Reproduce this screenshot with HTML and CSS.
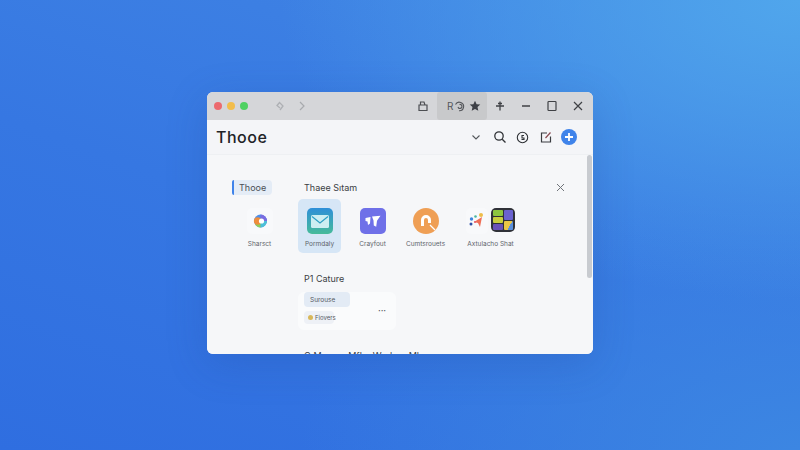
FILE: index.html
```html
<!DOCTYPE html>
<html lang="en">
<head>
    <meta charset="UTF-8">
    <title>Thooe</title>
    <link rel="stylesheet" href="styles.css">
</head>
<body>
    <div class="window">
        <!-- title bar -->
        <div class="titlebar">
            <div class="lights">
                <span class="light red"></span>
                <span class="light yellow"></span>
                <span class="light green"></span>
            </div>
            <div class="nav-arrows">
                <svg width="12" height="12" viewBox="0 0 12 12" fill="none" stroke="#aeb0b4" stroke-width="1.3"><path d="M6 2 3 5.500 6 8M6 3l3 3-3 4"/></svg>
                <svg width="12" height="12" viewBox="0 0 12 12" fill="none" stroke="#a8aaae" stroke-width="1.2"><path d="m4 2 4 4-4 4"/></svg>
            </div>
            <div class="title-tools">
                <span class="tool tool-tab">
                    <svg width="12" height="12" viewBox="0 0 12 12" fill="none" stroke="#4c4e52" stroke-width="1.2"><path d="M2 5h8v5.500H2zM3.500 5V2h3.500l1 3"/></svg>
                </span>
                <div class="tool-group">
                    <span class="group-text">R</span>
                    <svg width="11" height="11" viewBox="0 0 11 11" fill="none" stroke="#55575b" stroke-width="1.1"><path d="M1.500 3.500A4.300 4.300 0 1 1 5 9.800M5.500 3.500a2 2 0 1 1-1.500 2.500"/></svg>
                    <svg class="group-star" width="12" height="12" viewBox="0 0 12 12" fill="#3d4046"><path d="m6 .8 1.600 3.400 3.700.4-2.800 2.500.8 3.700L6 8.900l-3.300 1.900.8-3.700L.7 4.600l3.700-.4z"/></svg>
                </div>
                <span class="tool">
                    <svg width="12" height="12" viewBox="0 0 12 12" fill="none" stroke="#3f4145" stroke-width="1.300"><path d="M6 1.500v9M2 6h8M4 3.500h4"/></svg>
                </span>
                <span class="tool">
                    <svg width="12" height="12" viewBox="0 0 12 12" fill="none" stroke="#3f4145" stroke-width="1.300"><path d="M2 6h8"/></svg>
                </span>
                <span class="tool">
                    <svg width="12" height="12" viewBox="0 0 12 12" fill="none" stroke="#3f4145" stroke-width="1.200"><rect x="2" y="1.500" width="8" height="9" rx=".8"/></svg>
                </span>
                <span class="tool">
                    <svg width="12" height="12" viewBox="0 0 12 12" fill="none" stroke="#3f4145" stroke-width="1.200"><path d="m2 2 8 8M10 2l-8 8"/></svg>
                </span>
            </div>
        </div>

        <!-- header -->
        <div class="app-header">
            <h1>Thooe</h1>
            <div class="header-tools">
                <svg class="hd-chevron" width="12" height="12" viewBox="0 0 12 12" fill="none" stroke="#55585d" stroke-width="1.100"><path d="m2.500 4.500 3.500 3.500 3.500-3.500"/></svg>
                <svg width="14" height="14" viewBox="0 0 14 14" fill="none" stroke="#2f3236" stroke-width="1.300"><circle cx="6" cy="6" r="4.200"/><path d="m9.200 9.200 3.300 3.300"/></svg>
                <svg class="hd-clock" width="13" height="13" viewBox="0 0 13 13" fill="none" stroke="#2f3236" stroke-width="1.100"><circle cx="6.500" cy="6.500" r="5.200"/><path d="M8 4.500H6v2.500h2v1.500H5.500"/></svg>
                <svg width="14" height="14" viewBox="0 0 14 14" fill="none" stroke="#3a3c40" stroke-width="1.200"><path d="M8 3H2.500v9h9V6.500"/><path d="m6.500 8 5-5.500" stroke="#8a4a50"/></svg>
                <span class="add-btn">
                    <svg width="10" height="10" viewBox="0 0 10 10" fill="none" stroke="#fff" stroke-width="1.800"><path d="M5 1v8M1 5h8"/></svg>
                </span>
            </div>
        </div>

        <!-- content -->
        <div class="content">
            <aside class="sidebar">
                <div class="side-item">Thooe</div>
            </aside>
            <main class="main">
                <div class="section-head">
                    <h2>Thaee Sıtam</h2>
                    <svg width="9" height="9" viewBox="0 0 9 9" fill="none" stroke="#70747a" stroke-width="1"><path d="m1 1 7 7M8 1 1 8"/></svg>
                </div>
                <div class="apps">
                    <div class="app app-first">
                        <span class="app-icon icon-white">
                            <svg width="16" height="16" viewBox="0 0 16 16"><circle cx="8.500" cy="8" r="6.500" fill="#4f8fe8"/><path d="M8.500 1.500A6.500 6.500 0 0 1 15 8H8.500z" fill="#7a6ce0"/><path d="M15 8a6.500 6.500 0 0 1-6.500 6.500L8 8z" fill="#4cc0d8"/><path d="M8.500 14.500A6.500 6.500 0 0 1 3 11l5.500-3z" fill="#8fcf5a"/><circle cx="5.500" cy="8" r="3.700" fill="#ef8d3c"/><circle cx="9.500" cy="8" r="2.600" fill="#fff"/></svg>
                        </span>
                        <span class="app-label">Sharsct</span>
                    </div>
                    <div class="app app-selected">
                        <span class="app-icon icon-mail">
                            <svg width="18" height="13" viewBox="0 0 18 13"><rect width="18" height="13" rx="1.500" fill="#cdeef2"/><path d="m1 1.500 8 6.500 8-6.500" fill="none" stroke="#2d9fc4" stroke-width="1.200"/></svg>
                        </span>
                        <span class="app-label">Pormdaly</span>
                    </div>
                    <div class="app">
                        <span class="app-icon icon-purple">
                            <svg width="18" height="16" viewBox="0 0 18 16" fill="#fff"><path d="M1.500 5 6.500 4 6 10.500 4 12 3.500 8.500 1.500 8zM8 3.500l8.500-.8-3.500 5-.8 6-2.400-1.200-.3-5z"/></svg>
                        </span>
                        <span class="app-label">Crayfout</span>
                    </div>
                    <div class="app">
                        <span class="app-icon icon-orange">
                            <svg width="26" height="26" viewBox="0 0 26 26" fill="none"><path d="M8 18v-6a5 5 0 0 1 10 0v3h-3v-3a2 2 0 0 0-4 0v6z" fill="#fff"/><path d="m17 17 5 5" stroke="#fff" stroke-width="1.300"/></svg>
                        </span>
                        <span class="app-label">Cumtsrouets</span>
                    </div>
                    <div class="app app-double">
                        <div class="double-icons">
                            <span class="app-icon icon-white">
                                <svg width="18" height="18" viewBox="0 0 18 18"><path d="m14 5-2 10-2-4-4-1z" fill="#ef6f56"/><circle cx="13" cy="3" r="2" fill="#eebd48"/><circle cx="3.500" cy="7" r="1.700" fill="#3f86e0"/><circle cx="7.500" cy="4.500" r="1.300" fill="#49b8a0"/><circle cx="3" cy="12" r="1.500" fill="#2d4fa8"/><circle cx="7" cy="10" r="1.100" fill="#e65f6f"/></svg>
                            </span>
                            <span class="app-icon icon-grid">
                                <span class="grid-col">
                                    <span class="cell cell-green"></span>
                                    <span class="cell cell-lime"></span>
                                    <span class="cell cell-violet"></span>
                                </span>
                                <span class="grid-col">
                                    <span class="cell cell-blue"></span>
                                    <span class="cell cell-yellow"></span>
                                </span>
                            </span>
                        </div>
                        <span class="app-label">Axtulacho Shat</span>
                    </div>
                </div>

                <h2 class="capture-title">P1 Cature</h2>
                <div class="card">
                    <div class="card-rows">
                        <div class="pill pill-wide">Surouse</div>
                        <div class="pill pill-small"><span class="pill-dot"></span>Fiovers</div>
                    </div>
                    <span class="card-more">•••</span>
                </div>
                <h2 class="cut-title">O Mouser Mfhe Worlaor Mhor</h2>
            </main>
            <div class="scrollbar"></div>
        </div>
    </div>
</body>
</html>
```

FILE: styles.css
```css
body {
    margin: 0;
    width: 800px;
    height: 450px;
    overflow: hidden;
    display: flex;
    justify-content: center;
    padding-top: 92px;
    box-sizing: border-box;
    font-family: 'Inter', 'Liberation Sans', sans-serif;
    color: #33363b;
    background:
        radial-gradient(ellipse 520px 300px at 100% 0%, #50a6ec 0%, rgba(80, 166, 236, 0) 100%),
        radial-gradient(ellipse 500px 260px at 100% 100%, #3c86e2 0%, rgba(60, 134, 226, 0) 100%),
        linear-gradient(200deg, #4287e4 0%, #3677e2 55%, #2f6ee0 100%);
}

h1, h2 {
    margin: 0;
    font-weight: 400;
}

.window {
    width: 386px;
    height: 262px;
    border-radius: 6px;
    overflow: hidden;
    display: flex;
    flex-direction: column;
    background: #f4f5f8;
    box-shadow: 0 10px 40px rgba(30, 70, 150, 0.22);
}

/* title bar */
.titlebar {
    height: 28px;
    flex: none;
    display: flex;
    align-items: center;
    background: #d5d6d9;
    padding-left: 7px;
}

.lights {
    display: flex;
    gap: 5px;
}

.light {
    width: 8px;
    height: 8px;
    border-radius: 50%;
}

.red { background: #ec6a6e; }
.yellow { background: #f2bd4b; }
.green { background: #4fd162; }

.nav-arrows {
    display: flex;
    gap: 10px;
    margin-left: 26px;
}

.title-tools {
    display: flex;
    align-items: center;
    height: 100%;
    margin-left: auto;
    padding-right: 8px;
}

.tool {
    width: 14px;
    display: flex;
    justify-content: center;
    margin-left: 12px;
}

.tool-tab {
    margin: 0 7px 0 0;
}

.tool-group {
    width: 50px;
    height: 100%;
    box-sizing: border-box;
    display: flex;
    align-items: center;
    background: #c8c9cb;
    border-radius: 3px;
    padding-left: 10px;
}

.tool-group + .tool {
    margin-left: 6px;
}

.group-text {
    font-size: 10px;
    color: #55575b;
    margin-right: 1px;
}

.group-star {
    margin-left: 4px;
}

/* header */
.app-header {
    height: 35px;
    flex: none;
    display: flex;
    align-items: center;
    padding: 0 16px 0 9px;
    border-bottom: 1px solid #eef0f3;
    box-sizing: border-box;
}

.app-header h1 {
    font-size: 16px;
    font-weight: 500;
    letter-spacing: 0.5px;
    color: #212327;
}

.header-tools {
    margin-left: auto;
    display: flex;
    align-items: center;
    gap: 8px;
}

.hd-chevron {
    margin-right: 3px;
}

.hd-clock {
    margin: 0 2px 0 1px;
}

.add-btn {
    width: 16px;
    height: 16px;
    border-radius: 50%;
    background: #3f83ea;
    display: flex;
    align-items: center;
    justify-content: center;
}

/* content */
.content {
    flex: 1;
    min-height: 0;
    display: flex;
    position: relative;
    background: #f6f7f9;
}

.sidebar {
    width: 91px;
    flex: none;
    padding: 25px 0 0 25px;
    box-sizing: border-box;
}

.side-item {
    width: 40px;
    height: 15px;
    box-sizing: border-box;
    border-left: 2px solid #3f83ea;
    background: #e4ecf6;
    border-radius: 2px 4px 4px 2px;
    padding-left: 5px;
    font-size: 9px;
    line-height: 15px;
    color: #4a4e55;
}

.main {
    flex: 1;
    min-width: 0;
    padding-top: 26px;
}

.section-head {
    display: flex;
    align-items: center;
    justify-content: space-between;
    padding: 0 28px 0 6px;
}

.section-head h2,
.capture-title,
.cut-title {
    font-size: 9px;
    line-height: 13px;
    color: #3b3e44;
}

.apps {
    display: flex;
    margin-top: 5px;
}

.app {
    width: 43px;
    height: 54px;
    margin-right: 10px;
    box-sizing: border-box;
    padding-top: 9px;
    display: flex;
    flex-direction: column;
    align-items: center;
    flex: none;
    border-radius: 5px;
}

.app-first {
    margin-left: -60px;
    margin-right: 17px;
}

.app-selected {
    background: #d6e6f6;
}

.app-double {
    width: 49px;
    margin-left: 9px;
}

.double-icons {
    display: flex;
    gap: 3px;
}

.app-icon {
    width: 26px;
    height: 26px;
    flex: none;
    border-radius: 5px;
    display: flex;
    align-items: center;
    justify-content: center;
}

.double-icons .icon-white {
    width: 22px;
}

.app-label {
    margin-top: 6px;
    font-size: 6.500px;
    line-height: 9px;
    color: #60646b;
    white-space: nowrap;
}

.icon-white {
    background: #f8f9fb;
}

.icon-mail {
    background: linear-gradient(180deg, #2f8fd8 0%, #46bb9a 100%);
}

.icon-purple {
    background: #6f70e8;
}

.icon-orange {
    background: #ef9f55;
    border-radius: 50%;
}

.icon-grid {
    width: 24px;
    height: 24px;
    box-sizing: border-box;
    padding: 2px;
    background: #2f3138;
    align-items: stretch;
    gap: 1px;
}

.grid-col {
    flex: 1;
    display: flex;
    flex-direction: column;
    gap: 1px;
}

.cell {
    flex: 1;
    border-radius: 1px;
}

.cell-green { background: #8cc63f; }
.cell-lime { background: #c9cf3d; }
.cell-violet { background: #6a52b8; }
.cell-blue { background: #6a62d0; flex: 1.200; }
.cell-yellow { background: linear-gradient(120deg, #e9c545 60%, #5a8fdc 60%); }

.capture-title {
    margin: 19px 0 0 6px;
}

.card {
    width: 98px;
    height: 38px;
    margin-top: 7px;
    box-sizing: border-box;
    padding-left: 6px;
    display: flex;
    background: #fafbfc;
    border-radius: 6px;
}

.card-rows {
    display: flex;
    flex-direction: column;
    align-items: flex-start;
    gap: 4px;
}

.pill {
    background: #e3ebf5;
    border-radius: 4px;
    font-size: 6.500px;
    color: #55595f;
    display: flex;
    align-items: center;
}

.pill-wide {
    width: 46px;
    height: 15px;
    padding-left: 6px;
    box-sizing: border-box;
}

.pill-small {
    width: 30px;
    height: 13px;
    padding-left: 4px;
    box-sizing: border-box;
    background: #eef1f6;
    gap: 2px;
    font-size: 6px;
}

.pill-dot {
    width: 5px;
    height: 5px;
    border-radius: 50%;
    background: #d8b85a;
    flex: none;
}

.card-more {
    margin: 15px 0 0 auto;
    padding-right: 10px;
    font-size: 4px;
    line-height: 8px;
    color: #55585d;
    letter-spacing: 0.3px;
}

.cut-title {
    margin: 19px 0 0 6px;
    white-space: nowrap;
}

.scrollbar {
    position: absolute;
    top: 0;
    right: 1px;
    width: 5px;
    height: 123px;
    background: #c8cbd0;
    border-radius: 3px;
}
```
